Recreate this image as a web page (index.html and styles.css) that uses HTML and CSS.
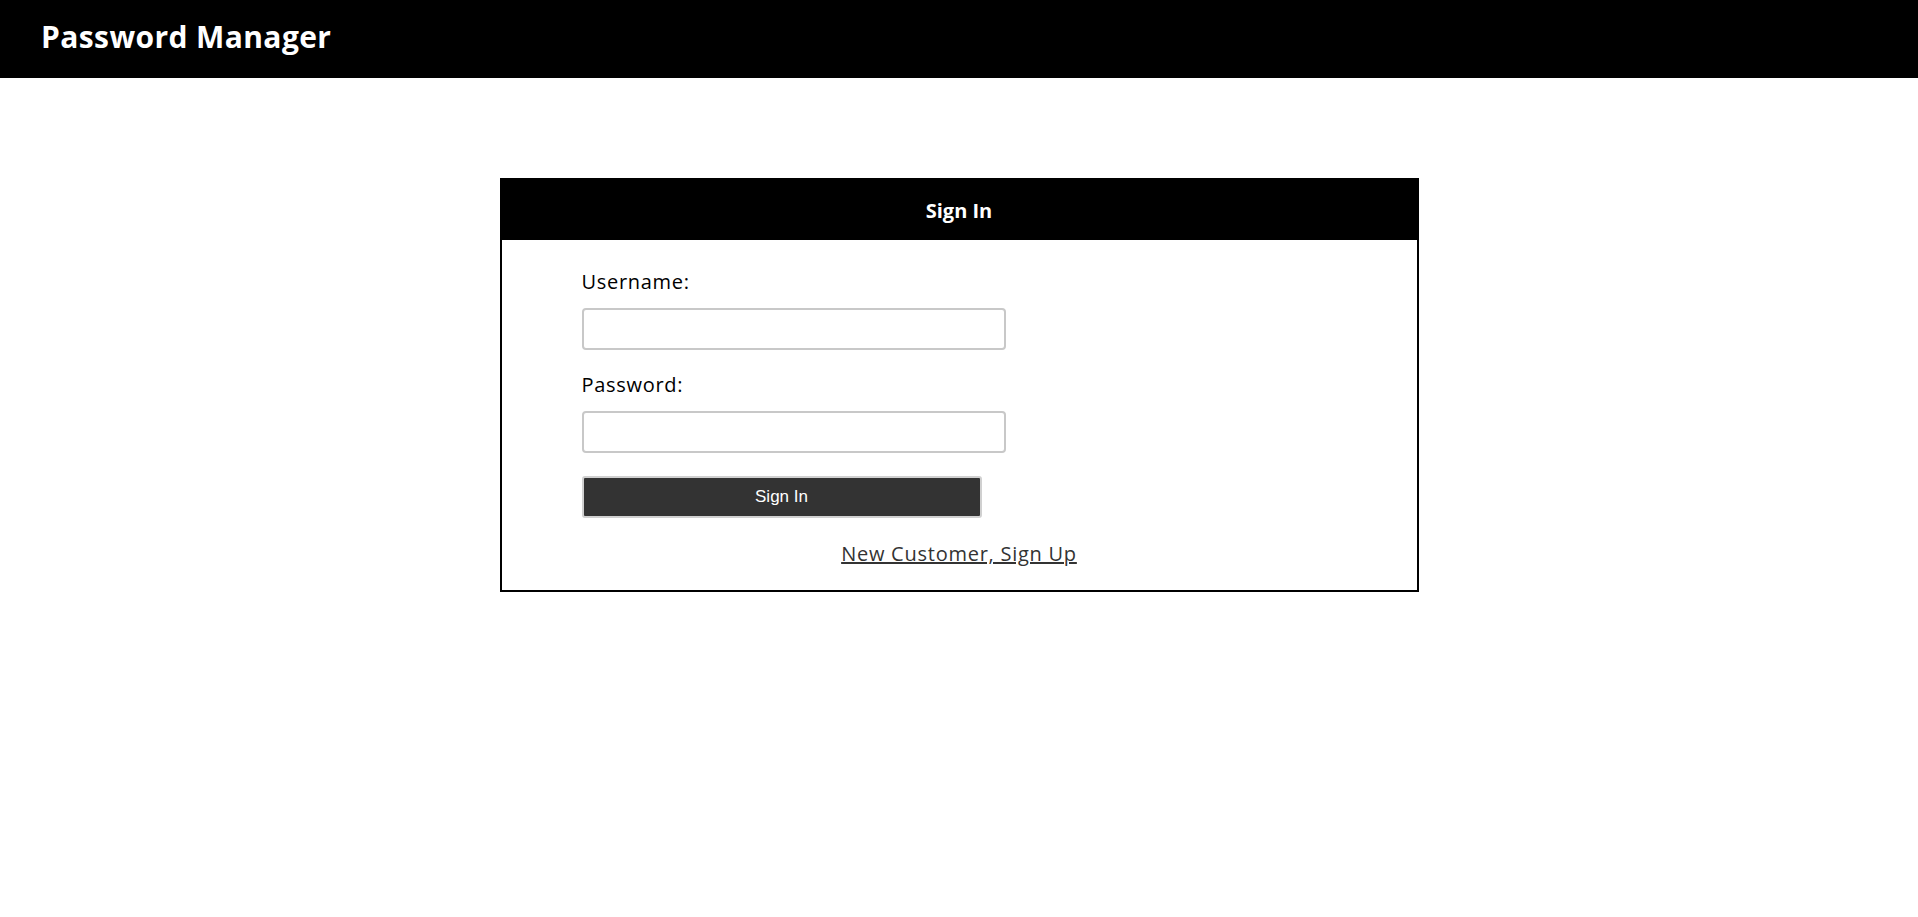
FILE: index.html
```html
<!DOCTYPE html>
<html lang="en">
<head>
<meta charset="utf-8">
<title>Password Manager</title>
<link rel="stylesheet" href="styles.css">
</head>
<body>
<header class="topbar">
  <h1 class="brand">Password Manager</h1>
</header>
<main class="page">
  <section class="card">
    <div class="card-head">Sign In</div>
    <form class="card-body">
      <label class="field-label" for="u">Username:</label>
      <input class="field-input" id="u" type="text">
      <label class="field-label" for="p">Password:</label>
      <input class="field-input" id="p" type="password">
      <button class="submit" type="button">Sign In</button>
      <div class="signup"><a href="#" class="signup-link">New Customer, Sign Up</a></div>
    </form>
  </section>
</main>
</body>
</html>
```

FILE: styles.css
```css
* { box-sizing: border-box; }
body {
  margin: 0;
  font-family: "Open Sans", "Noto Sans", sans-serif;
  background: #fff;
  color: #000;
}
.topbar {
  background: #000;
  height: 78px;
  display: flex;
  align-items: center;
  padding-left: 41px;
  padding-bottom: 5px;
}
.brand {
  margin: 0;
  color: #fff;
  font-size: 30px;
  font-weight: 700;
  letter-spacing: 0.4px;
}
.page {
  padding-top: 100px;
  display: flex;
  justify-content: center;
}
.card {
  width: 919px;
  border: 2px solid #000;
}
.card-head {
  background: #000;
  color: #fff;
  height: 60px;
  display: flex;
  align-items: center;
  justify-content: center;
  font-weight: 700;
  font-size: 20px;
}
.card-body {
  display: flex;
  flex-direction: column;
  align-items: flex-start;
  padding: 27px 80px 20px 80px;
}
.field-label {
  font-size: 20px;
  line-height: 30px;
  letter-spacing: 0.7px;
  margin-bottom: 11px;
}
.field-input {
  width: 424px;
  height: 42px;
  border: 2px solid #c8c8c8;
  border-radius: 4px;
  margin-bottom: 20px;
}
.submit {
  width: 400px;
  height: 42px;
  background: #333;
  color: #fff;
  border: 2px solid #d0d0d0;
  border-radius: 3px;
  font-family: "Liberation Sans", Arial, sans-serif;
  font-size: 17px;
  margin-top: 3px;
}
.signup {
  align-self: stretch;
  text-align: center;
  margin-top: 21px;
  line-height: 30px;
}
.signup-link {
  color: #333;
  font-size: 20px;
  letter-spacing: 0.75px;
  text-decoration: underline;
}
```
